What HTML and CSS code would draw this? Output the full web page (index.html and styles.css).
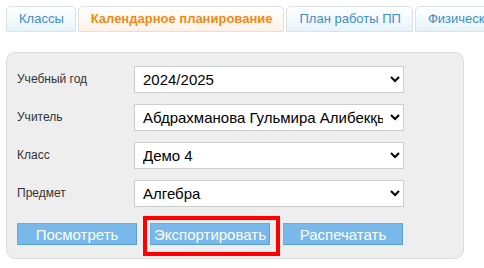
FILE: index.html
```html
<!DOCTYPE html>
<html lang="ru">
<head>
    <meta charset="UTF-8">
    <meta name="viewport" content="width=device-width, initial-scale=1.0">
    <title>Календарное планирование</title>
    <link rel="stylesheet" href="styles.css">
</head>
<body>
    <div class="page">
        <ul class="tabs">
            <li class="tab">Классы</li>
            <li class="tab active">Календарное планирование</li>
            <li class="tab">План работы ПП</li>
            <li class="tab">Физическая культура</li>
        </ul>

        <div class="panel">
            <div class="row">
                <label for="year">Учебный год</label>
                <select id="year">
                    <option>2024/2025</option>
                </select>
            </div>
            <div class="row">
                <label for="teacher">Учитель</label>
                <select id="teacher">
                    <option>Абдрахманова Гульмира Алибекқызы</option>
                </select>
            </div>
            <div class="row">
                <label for="class">Класс</label>
                <select id="class">
                    <option>Демо 4</option>
                </select>
            </div>
            <div class="row">
                <label for="subject">Предмет</label>
                <select id="subject">
                    <option>Алгебра</option>
                </select>
            </div>

            <div class="actions">
                <button class="btn">Посмотреть</button>
                <div class="highlight">
                    <button class="btn">Экспортировать</button>
                    <span class="mark"></span>
                </div>
                <button class="btn">Распечатать</button>
            </div>
        </div>
    </div>
</body>
</html>
```

FILE: styles.css
```css
body {
    font-family: "Liberation Sans", Arial, sans-serif;
    margin: 0;
    padding: 0;
    background-color: #fff;
    color: #333;
    overflow: hidden;
}

.page {
    padding: 6px 0 0 6px;
}

.tabs {
    list-style: none;
    margin: 0;
    padding: 0;
    display: flex;
    gap: 2px;
    white-space: nowrap;
    overflow: hidden;
}

.tab {
    height: 24px;
    line-height: 24px;
    padding: 0 11px 0 12px;
    font-size: 13px;
    color: #3b8ec7;
    border: 1px solid #dae2e6;
    border-radius: 5px 5px 0 0;
    background: linear-gradient(to bottom, #ffffff, #e6f3f9);
}

.tab.active {
    color: #f18a12;
    font-weight: bold;
    background: linear-gradient(to bottom, #ffffff, #fdf2e7);
}

.panel {
    margin-top: 20px;
    width: 446px;
    padding: 13px 0 13px 10px;
    background-color: #eeeeee;
    border: 1px solid #dcdcdc;
    border-radius: 9px;
}

.row {
    display: flex;
    align-items: center;
    margin-bottom: 11px;
}

label {
    width: 117px;
    font-size: 12px;
    color: #333;
    margin-top: -2px;
}

select {
    width: 270px;
    height: 27px;
    font-family: "Liberation Sans", Arial, sans-serif;
    font-size: 15px;
    color: #000;
    background-color: #fff;
    border: 1px solid #cdcdcd;
    border-radius: 0;
    padding: 0 4px;
}

.actions {
    display: flex;
    gap: 13px;
    margin-top: 16px;
}

.btn {
    width: 120px;
    height: 22px;
    padding: 0;
    font-family: "Liberation Sans", Arial, sans-serif;
    font-size: 15px;
    color: #fff;
    background-color: #78b8eb;
    border: 1px solid #6aaee3;
    border-bottom-color: #5a9fd6;
    border-right-color: #5a9fd6;
    cursor: pointer;
}

.btn:hover {
    background-color: #5fa8e2;
}

.highlight {
    position: relative;
}

.mark {
    position: absolute;
    left: -7px;
    top: -7px;
    width: 137px;
    height: 40px;
    box-sizing: border-box;
    border: 4px solid #ff0000;
    pointer-events: none;
}
```
